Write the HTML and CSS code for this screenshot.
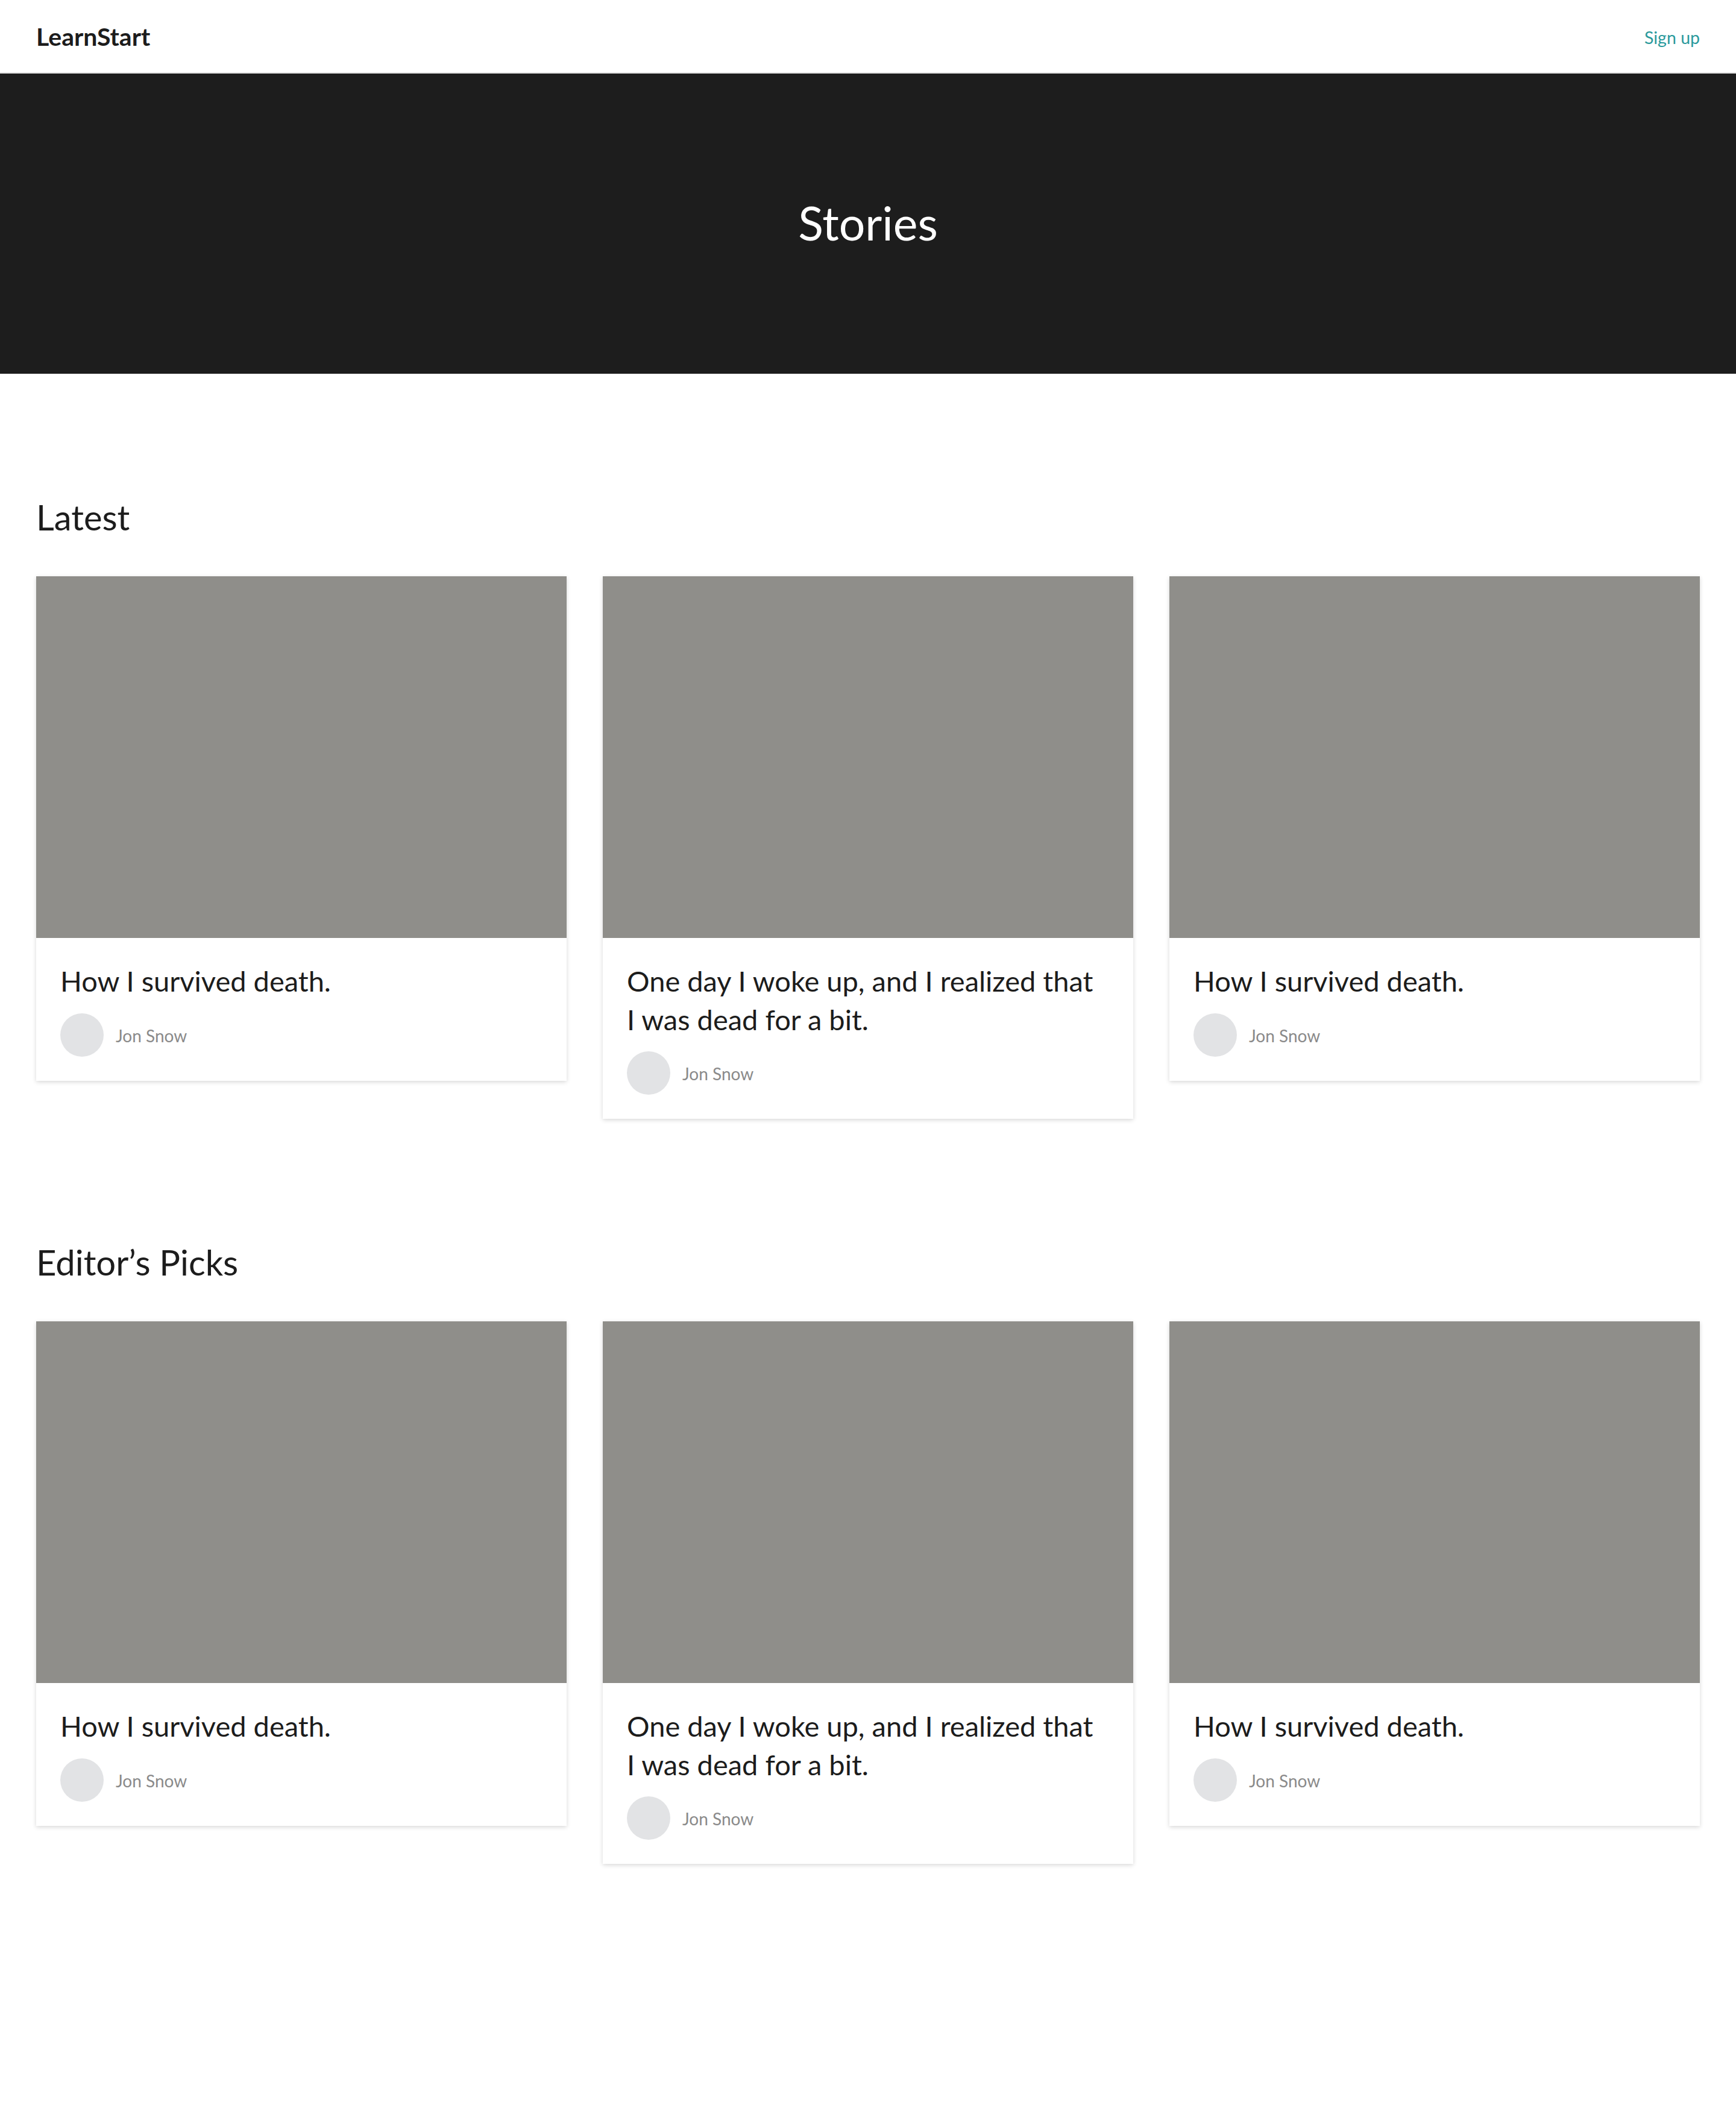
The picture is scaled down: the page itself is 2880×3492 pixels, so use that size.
FILE: index.html
```html
<!DOCTYPE html>
<html lang="en">
<head>
<meta charset="utf-8">
<title>LearnStart – Stories</title>
<link rel="stylesheet" href="styles.css">
</head>
<body>
<header class="topbar">
  <a class="brand" href="#">LearnStart</a>
  <a class="signup" href="#">Sign up</a>
</header>

<section class="hero">
  <h1 class="hero-title">Stories</h1>
</section>

<main class="main">
  <section class="section">
    <h2 class="section-title">Latest</h2>
    <div class="grid">
      <article class="card">
        <div class="card-img"></div>
        <div class="card-body">
          <h3 class="card-title">How I survived death.</h3>
          <div class="author"><span class="avatar"></span><span class="author-name">Jon Snow</span></div>
        </div>
      </article>
      <article class="card">
        <div class="card-img"></div>
        <div class="card-body">
          <h3 class="card-title">One day I woke up, and I realized that I was dead for a bit.</h3>
          <div class="author"><span class="avatar"></span><span class="author-name">Jon Snow</span></div>
        </div>
      </article>
      <article class="card">
        <div class="card-img"></div>
        <div class="card-body">
          <h3 class="card-title">How I survived death.</h3>
          <div class="author"><span class="avatar"></span><span class="author-name">Jon Snow</span></div>
        </div>
      </article>
    </div>
  </section>

  <section class="section section-last">
    <h2 class="section-title">Editor’s Picks</h2>
    <div class="grid">
      <article class="card">
        <div class="card-img"></div>
        <div class="card-body">
          <h3 class="card-title">How I survived death.</h3>
          <div class="author"><span class="avatar"></span><span class="author-name">Jon Snow</span></div>
        </div>
      </article>
      <article class="card">
        <div class="card-img"></div>
        <div class="card-body">
          <h3 class="card-title">One day I woke up, and I realized that I was dead for a bit.</h3>
          <div class="author"><span class="avatar"></span><span class="author-name">Jon Snow</span></div>
        </div>
      </article>
      <article class="card">
        <div class="card-img"></div>
        <div class="card-body">
          <h3 class="card-title">How I survived death.</h3>
          <div class="author"><span class="avatar"></span><span class="author-name">Jon Snow</span></div>
        </div>
      </article>
    </div>
  </section>
</main>
</body>
</html>
```
FILE: styles.css
```css
* { box-sizing: border-box; }

body {
  margin: 0;
  font-family: "Lato", "Noto Sans", sans-serif;
  color: #1c1c1c;
  background: #ffffff;
}

a { text-decoration: none; }

.topbar {
  height: 122px;
  padding: 0 60px;
  display: flex;
  align-items: center;
  justify-content: space-between;
  border-bottom: 2px solid #e2e2e2;
  background: #ffffff;
}

.brand {
  font-size: 41px;
  font-weight: 700;
  color: #1c1c1c;
  line-height: 1;
}

.signup {
  font-size: 28.5px;
  color: #2a9a9c;
  line-height: 1;
  margin-top: 4px;
}

.hero {
  height: 498px;
  background: #1d1d1d;
  display: flex;
  align-items: center;
  justify-content: center;
}

.hero-title {
  margin: 0;
  font-size: 77px;
  font-weight: 400;
  color: #ffffff;
  line-height: 1;
  padding-bottom: 4px;
}

.section {
  padding: 202px 60px 0;
}

.section-last {
  padding-bottom: 400px;
}

.section-title {
  margin: 0 0 62px;
  font-size: 58px;
  font-weight: 400;
  line-height: 72px;
  color: #1c1c1c;
}

.grid {
  display: grid;
  grid-template-columns: repeat(3, 1fr);
  gap: 60px;
  align-items: start;
}

.card {
  background: #ffffff;
  box-shadow: 0 2px 7px rgba(0, 0, 0, 0.16);
}

.card-img {
  height: 600px;
  background: #8f8e8a;
}

.card-body {
  padding: 40px 50px 40px 40px;
}

.card-title {
  margin: 0;
  font-size: 47px;
  font-weight: 400;
  line-height: 63.5px;
  color: #1c1c1c;
}

.author {
  margin-top: 21px;
  display: flex;
  align-items: center;
  gap: 20px;
}

.avatar {
  width: 72px;
  height: 72px;
  border-radius: 50%;
  background: #e2e3e5;
  flex: none;
}

.author-name {
  font-size: 28px;
  color: #8a8a8a;
  line-height: 1;
  padding-top: 2px;
}
```
